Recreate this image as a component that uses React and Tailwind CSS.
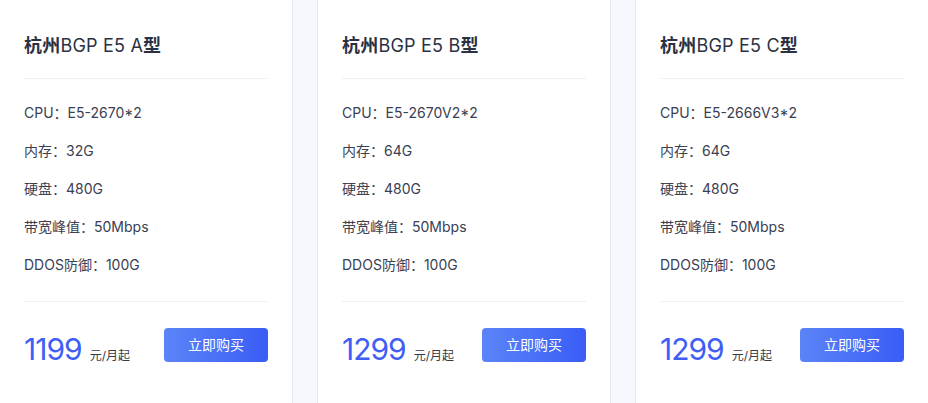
const plans = [
  { name: 'A', cpu: 'E5-2670*2', ram: '32G', price: '1199' },
  { name: 'B', cpu: 'E5-2670V2*2', ram: '64G', price: '1299' },
  { name: 'C', cpu: 'E5-2666V3*2', ram: '64G', price: '1299' },
];

const font = { fontFamily: 'Inter, "Noto Sans CJK SC", sans-serif' };

function PlanCard({ plan }) {
  const rows = [
    ['CPU', plan.cpu],
    ['内存', plan.ram],
    ['硬盘', '480G'],
    ['带宽峰值', '50Mbps'],
    ['DDOS防御', '100G'],
  ];

  return (
    <div className="w-[294px] shrink-0 bg-white border border-[#e6e9f3] px-6 pt-8 pb-10">
      <h3 className="text-lg leading-7 font-normal text-[#2b3142] tracking-[0.2px]">
        <span className="font-bold">杭州</span>BGP E5 {plan.name}
        <span className="font-bold">型</span>
      </h3>
      <div className="mt-[18px] h-px bg-[#edf0f7]" />
      <ul className="pt-[15px] pb-[17px]">
        {rows.map(([label, value]) => (
          <li key={label} className="text-sm leading-[38px] text-[#3a4052]">
            {label}：{value}
          </li>
        ))}
      </ul>
      <div className="h-px bg-[#edf0f7]" />
      <div className="mt-6 flex items-center justify-between">
        <div className="flex items-baseline gap-2 pt-2">
          <span className="text-[30px] leading-none text-[#3f5ef7] tracking-[-1px]">{plan.price}</span>
          <span className="text-xs text-[#333a4a]">元/月起</span>
        </div>
        <button className="w-[104px] h-[34px] rounded-sm bg-gradient-to-r from-[#5c84f8] to-[#3a5cf5] text-white text-sm">
          立即购买
        </button>
      </div>
    </div>
  );
}

export default function App() {
  return (
    <div className="min-h-[403px] bg-[#f7f8fd] overflow-hidden" style={font}>
      <div className="-ml-px -mt-px flex gap-6">
        {plans.map((p) => (
          <PlanCard key={p.name} plan={p} />
        ))}
      </div>
    </div>
  );
}
